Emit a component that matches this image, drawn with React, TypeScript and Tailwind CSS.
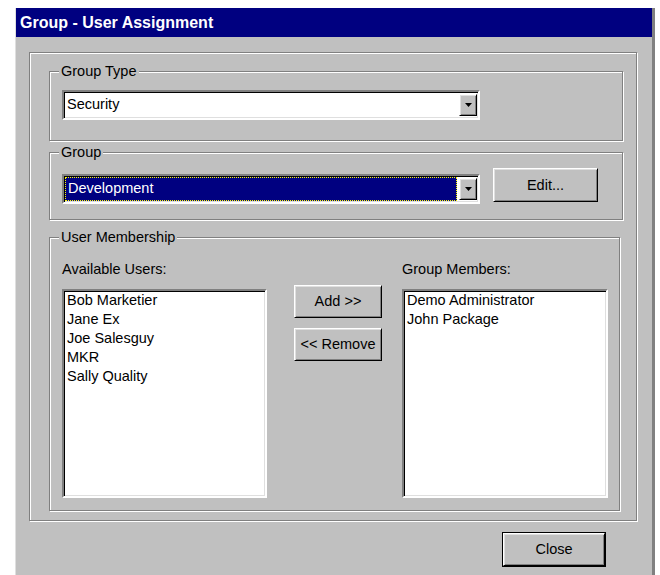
import type { ReactNode } from "react";

const sunken =
  "border-2 border-t-[#808080] border-l-[#808080] border-b-white border-r-white shadow-[inset_1px_1px_0_#000,inset_-1px_-1px_0_#dfdfdf]";
const raised =
  "bg-[#c0c0c0] border border-t-white border-l-white border-b-black border-r-black shadow-[inset_1px_1px_0_#dfdfdf,inset_-1px_-1px_0_#808080]";

function GroupBox({
  label,
  className = "",
  children,
}: {
  label?: string;
  className?: string;
  children?: ReactNode;
}) {
  return (
    <div
      className={`relative border border-[#808080] shadow-[inset_1px_1px_0_#fff,1px_1px_0_#fff] ${className}`}
    >
      {label && (
        <span className="absolute left-[9px] -top-[9px] bg-[#c0c0c0] px-[2px] leading-[17px]">
          {label}
        </span>
      )}
      {children}
    </div>
  );
}

function DropButton() {
  return (
    <div className={`flex h-[22px] w-[18px] shrink-0 items-center justify-center ${raised}`}>
      <svg width="7" height="4" viewBox="0 0 7 4">
        <polygon points="0,0 7,0 3.5,4" fill="#000" />
      </svg>
    </div>
  );
}

function Button({
  children,
  className = "",
}: {
  children: ReactNode;
  className?: string;
}) {
  return (
    <div className={`flex items-center justify-center leading-[17px] ${raised} ${className}`}>
      {children}
    </div>
  );
}

function ListBox({ items }: { items: string[] }) {
  return (
    <div className={`mt-[11px] h-[209px] bg-white ${sunken}`}>
      {items.map((name) => (
        <div key={name} className="pl-[3px] leading-[19px]">
          {name}
        </div>
      ))}
    </div>
  );
}

export default function App() {
  return (
    <div className="h-[575px] overflow-hidden bg-white pl-[15px] pt-[8px] font-['Liberation_Sans',Arial,sans-serif] text-[14.5px] text-black">
      <div className="flex h-[567px] w-[640px] flex-col border-l border-r-[3px] border-l-[#dfdfdf] border-r-[#808080] bg-[#c0c0c0]">
        <div className="flex h-[29px] items-center bg-[#000080] pl-[4px] text-[16px] font-bold text-white">
          Group - User Assignment
        </div>

        <div className="pl-[13px] pt-[15px]">
          <GroupBox className="h-[469px] w-[608px] pl-[19px] pt-[18px]">
            <GroupBox label="Group Type" className="h-[70px] w-[574px] pl-[12px] pt-[18px]">
              <div className={`flex h-[30px] w-[418px] items-center bg-white p-px ${sunken}`}>
                <div className="flex-1 pl-[2px]">Security</div>
                <DropButton />
              </div>
            </GroupBox>

            <GroupBox label="Group" className="mt-[11px] h-[68px] w-[574px] pl-[12px]">
              <div className="flex items-start">
                <div className={`mt-[21px] flex h-[30px] w-[418px] items-center bg-white p-px ${sunken}`}>
                  <div className="mr-[2px] flex h-full flex-1 items-center border border-dotted border-[#ffff00] bg-[#000080] pl-[2px] text-white">
                    Development
                  </div>
                  <DropButton />
                </div>
                <Button className="ml-[13px] mt-[15px] h-[34px] w-[105px]">Edit...</Button>
              </div>
            </GroupBox>

            <GroupBox label="User Membership" className="mt-[17px] h-[274px] w-[571px]">
              <div className="flex pl-[12px] pt-[23px]">
                <div className="w-[205px]">
                  <div className="leading-[17px]">Available Users:</div>
                  <ListBox items={["Bob Marketier", "Jane Ex", "Joe Salesguy", "MKR", "Sally Quality"]} />
                </div>

                <div className="ml-[27px] mt-[24px] flex flex-col gap-[10px]">
                  <Button className="h-[33px] w-[88px]">Add &gt;&gt;</Button>
                  <Button className="h-[33px] w-[88px]">&lt;&lt; Remove</Button>
                </div>

                <div className="ml-[20px] w-[206px]">
                  <div className="leading-[17px]">Group Members:</div>
                  <ListBox items={["Demo Administrator", "John Package"]} />
                </div>
              </div>
            </GroupBox>
          </GroupBox>
        </div>

        <div className="mt-[11px] flex justify-end pr-[46px]">
          <div className="border border-black">
            <Button className="h-[33px] w-[102px]">Close</Button>
          </div>
        </div>
      </div>
    </div>
  );
}
